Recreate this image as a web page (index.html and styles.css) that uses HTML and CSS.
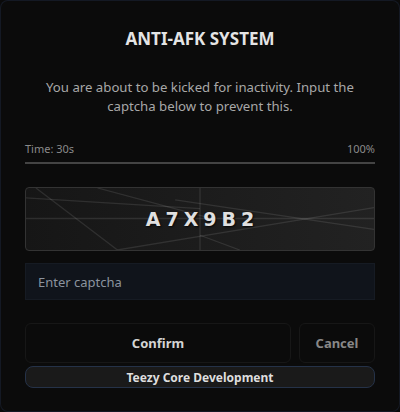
FILE: index.html
```html
<!DOCTYPE html>
<html>
<head>
<meta charset="utf-8">
<link rel="stylesheet" href="styles.css">
</head>
<body>
<div class="modal">
  <h1 class="title">ANTI-AFK SYSTEM</h1>
  <p class="desc">You are about to be kicked for inactivity. Input the captcha below to prevent this.</p>
  <div class="timer">
    <div class="timer-labels"><span>Time: 30s</span><span>100%</span></div>
    <div class="bar"><div class="bar-fill"></div></div>
  </div>
  <div class="captcha">
    <svg class="noise" viewBox="0 0 350 63" preserveAspectRatio="none">
      <line x1="10" y1="0" x2="92" y2="63"/>
      <line x1="0" y1="10" x2="175" y2="21"/>
      <line x1="0" y1="31" x2="350" y2="31"/>
      <line x1="175" y1="0" x2="175" y2="63"/>
      <line x1="72" y1="0" x2="190" y2="32"/>
      <line x1="92" y1="63" x2="350" y2="20"/>
      <line x1="150" y1="12" x2="350" y2="42"/>
      <line x1="175" y1="48" x2="215" y2="63"/>
    </svg>
    <span class="code">A7X9B2</span>
  </div>
  <div class="input">Enter captcha</div>
  <div class="actions">
    <div class="btn confirm">Confirm</div>
    <div class="btn cancel">Cancel</div>
  </div>
  <div class="footer">Teezy Core Development</div>
</div>
</body>
</html>
```
FILE: styles.css
```css
* { box-sizing: border-box; }
html, body { margin: 0; padding: 0; }
body {
  background: #0a0a0a;
  font-family: "Noto Sans", "Open Sans", sans-serif;
}
.modal {
  width: 400px;
  height: 412px;
  background: #0b0b0b;
  border: 1px solid rgba(60, 90, 150, 0.18);
  border-radius: 8px;
  padding: 26px 24px 0 24px;
  display: flex;
  flex-direction: column;
}
.title {
  margin: 0;
  text-align: center;
  font-size: 17px;
  line-height: 24px;
  font-weight: 700;
  color: #e4e4e4;
}
.desc {
  margin: 27px 10px 0;
  text-align: center;
  font-size: 13.2px;
  line-height: 19px;
  color: #a8a8a8;
}
.timer { margin-top: 25px; }
.timer-labels {
  display: flex;
  justify-content: space-between;
  font-size: 11px;
  line-height: 16px;
  color: #8a8a8a;
}
.bar {
  margin-top: 5px;
  height: 2px;
  background: #2a2a2a;
}
.bar-fill { width: 100%; height: 100%; background: #444; }
.captcha {
  position: relative;
  margin-top: 23px;
  height: 64px;
  border: 1px solid #333;
  border-radius: 4px;
  background: linear-gradient(90deg, #161616, #222);
  display: flex;
  align-items: center;
  justify-content: center;
  overflow: hidden;
}
.noise {
  position: absolute;
  inset: 0;
  width: 100%;
  height: 100%;
}
.noise line { stroke: rgba(255,255,255,0.1); stroke-width: 1.3; }
.code {
  position: relative;
  font-family: "DejaVu Sans", sans-serif;
  font-weight: 700;
  font-size: 19px;
  letter-spacing: 5px;
  margin-right: -5px;
  color: #e0e0e0;
  text-shadow: 1px 1px 2px rgba(0,0,0,0.8);
}
.input {
  margin-top: 12px;
  height: 37px;
  background: #10141b;
  border: 1px solid #161b23;
  padding: 0 12px;
  display: flex;
  align-items: center;
  font-size: 13px;
  color: #8b939e;
}
.actions {
  margin-top: 23px;
  display: flex;
  gap: 8px;
}
.btn {
  height: 40px;
  border: 1px solid #171717;
  border-radius: 6px;
  background: #0b0b0b;
  display: flex;
  align-items: center;
  justify-content: center;
  font-size: 13px;
  font-weight: 700;
}
.confirm { flex: 1; color: #d4d4d4; }
.cancel { width: 76px; color: #888; }
.footer {
  margin-top: 3px;
  height: 22px;
  border: 1px solid #253248;
  border-radius: 8px;
  background: #1a1a1a;
  display: flex;
  align-items: center;
  justify-content: center;
  font-size: 12px;
  font-weight: 700;
  color: #dedede;
}
```
